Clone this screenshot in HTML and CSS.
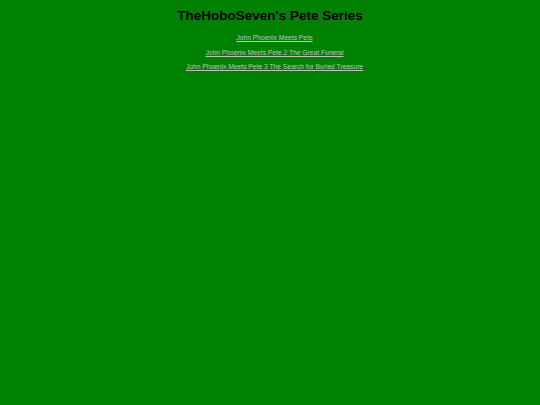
FILE: index.html
```html
<!DOCTYPE html>
<html>
<head>
<meta charset="utf-8">
<link rel="stylesheet" href="styles.css">
</head>
<body>
<div class="page">
<h1 class="title">TheHoboSeven's Pete Series</h1>
<p class="item"><a class="link" href="#">John Phoenix Meets Pete</a></p>
<p class="item"><a class="link" href="#">John Phoenix Meets Pete 2 The Great Funeral</a></p>
<p class="item"><a class="link" href="#">John Phoenix Meets Pete 3 The Search for Buried Treasure</a></p>
</div>
</body>
</html>
```
FILE: styles.css
```css
html, body {
  margin: 0;
  padding: 0;
  background: #008000;
  height: 100%;
}
.page {
  font-family: "Liberation Sans", Arial, sans-serif;
  text-align: center;
  padding-top: 7px;
}
.title {
  font-size: 13.5px;
  font-weight: bold;
  color: #000;
  margin: 0 0 6px 0;
  line-height: 18px;
}
.item {
  margin: 0;
  padding-left: 9px;
  font-size: 6.7px;
  line-height: 14.5px;
}
.link {
  color: #c0c0c0;
  text-decoration: underline;
}
```
